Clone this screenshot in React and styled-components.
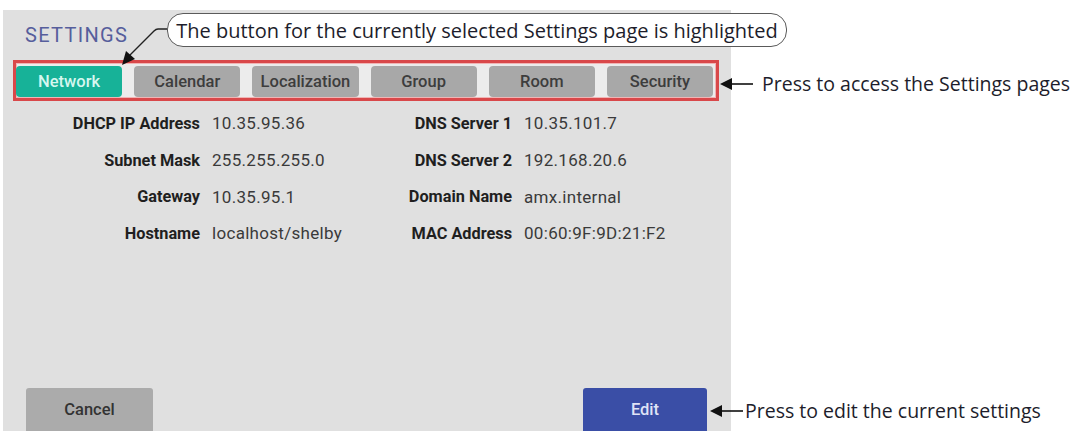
import styled, { createGlobalStyle } from "styled-components";

const Global = createGlobalStyle`
  html, body {
    margin: 0;
    padding: 0;
    background: #ffffff;
  }
  body {
    width: 1076px;
    height: 431px;
    overflow: hidden;
  }
`;

const Page = styled.div`
  position: relative;
  width: 1076px;
  height: 431px;
  padding: 10px 0 0 3px;
  box-sizing: border-box;
`;

const Panel = styled.div`
  width: 728px;
  height: 421px;
  background: #e0e0e0;
  display: flex;
  flex-direction: column;
  padding-top: 14px;
  box-sizing: border-box;
  overflow: hidden;
  font-family: Roboto, "Liberation Sans", sans-serif;
`;

const Title = styled.h1`
  margin: 0 0 13px 22px;
  font-size: 20px;
  font-weight: 400;
  letter-spacing: 1.3px;
  color: #565e9c;
  line-height: 23px;
`;

const TabBar = styled.div`
  display: flex;
  gap: 12px;
  margin-left: 10px;
  width: 706px;
  box-sizing: border-box;
  border: 3px solid #d9484a;
  box-shadow: inset 0 0 0 1px #f0b5b5;
  background: #ececec;
  padding: 3px 3px 1px 0;
`;

const Tab = styled.button`
  flex: 1;
  height: 31px;
  border: none;
  border-radius: 4px;
  background: ${(p) => (p.$active ? "#17b298" : "#a8a8a8")};
  color: ${(p) => (p.$active ? "#d6f7ef" : "#3d3d3d")};
  font-family: Roboto, "Liberation Sans", sans-serif;
  font-size: 16.5px;
  font-weight: 500;
  padding: 0;
`;

const InfoGrid = styled.div`
  display: grid;
  grid-template-columns: 150px 140px 148px auto;
  grid-auto-rows: 36.7px;
  column-gap: 12px;
  align-items: center;
  margin: 4px 0 0 47px;
`;

const Label = styled.span`
  text-align: right;
  font-size: 16.3px;
  font-weight: 700;
  color: #1f1f1f;
  white-space: nowrap;
`;

const Value = styled.span`
  font-size: 17px;
  color: #3a3a3a;
  letter-spacing: 0.3px;
  white-space: nowrap;
`;

const Footer = styled.div`
  margin-top: auto;
  display: flex;
  justify-content: space-between;
  padding: 0 24px 0 23px;
`;

const ActionButton = styled.button`
  width: ${(p) => p.$width}px;
  height: 43px;
  border: none;
  border-radius: 3px 3px 0 0;
  background: ${(p) => (p.$primary ? "#3a4ea6" : "#ababab")};
  color: ${(p) => (p.$primary ? "#dfe3f6" : "#333333")};
  font-family: Roboto, "Liberation Sans", sans-serif;
  font-size: 16.5px;
  font-weight: 500;
`;

const Callout = styled.div`
  position: absolute;
  left: 167px;
  top: 13px;
  width: 620px;
  height: 34px;
  box-sizing: border-box;
  border: 1.5px solid #5a5a5a;
  border-radius: 16px;
  background: #ffffff;
  display: flex;
  align-items: center;
  justify-content: center;
  font-family: "Open Sans", "DejaVu Sans", sans-serif;
  font-size: 20px;
  color: #1d1d2b;
  white-space: nowrap;
`;

const Leader = styled.svg`
  position: absolute;
  left: 110px;
  top: 20px;
`;

const Note = styled.div`
  position: absolute;
  left: ${(p) => p.$x}px;
  top: ${(p) => p.$y}px;
  display: flex;
  align-items: center;
  gap: ${(p) => p.$gap}px;
  font-family: "Open Sans", "DejaVu Sans", sans-serif;
  font-size: 19.5px;
  color: #1d1d2b;
  white-space: nowrap;
`;

function Arrow({ length }) {
  return (
    <svg width={length} height="14" viewBox={`0 0 ${length} 14`}>
      <polygon points="0,7 12,1 12,13" fill="#111" />
      <line x1="10" y1="7" x2={length} y2="7" stroke="#111" strokeWidth="1.6" />
    </svg>
  );
}

const tabs = ["Network", "Calendar", "Localization", "Group", "Room", "Security"];

const rows = [
  ["DHCP IP Address", "10.35.95.36", "DNS Server 1", "10.35.101.7"],
  ["Subnet Mask", "255.255.255.0", "DNS Server 2", "192.168.20.6"],
  ["Gateway", "10.35.95.1", "Domain Name", "amx.internal"],
  ["Hostname", "localhost/shelby", "MAC Address", "00:60:9F:9D:21:F2"],
];

export default function App() {
  return (
    <Page>
      <Global />
      <Panel>
        <Title>SETTINGS</Title>
        <TabBar>
          {tabs.map((t, i) => (
            <Tab key={t} $active={i === 0}>
              {t}
            </Tab>
          ))}
        </TabBar>
        <InfoGrid>
          {rows.map((r) => [
            <Label key={r[0]}>{r[0]}</Label>,
            <Value key={r[0] + "v"}>{r[1]}</Value>,
            <Label key={r[2]}>{r[2]}</Label>,
            <Value key={r[2] + "v"}>{r[3]}</Value>,
          ])}
        </InfoGrid>
        <Footer>
          <ActionButton $width={127}>Cancel</ActionButton>
          <ActionButton $width={124} $primary>
            Edit
          </ActionButton>
        </Footer>
      </Panel>

      <Leader width="60" height="50" viewBox="0 0 60 50">
        <path d="M57 9 L48 9 Q46 9 44 11 L19 36" fill="none" stroke="#222" strokeWidth="1.4" />
        <polygon points="12,45 16,31 25,39" fill="#111" />
      </Leader>
      <Callout>The button for the currently selected Settings page is highlighted</Callout>

      <Note $x={720} $y={70} $gap={9}>
        <Arrow length={33} />
        <span>Press to access the Settings pages</span>
      </Note>
      <Note $x={710} $y={397} $gap={2}>
        <Arrow length={33} />
        <span>Press to edit the current settings</span>
      </Note>
    </Page>
  );
}
